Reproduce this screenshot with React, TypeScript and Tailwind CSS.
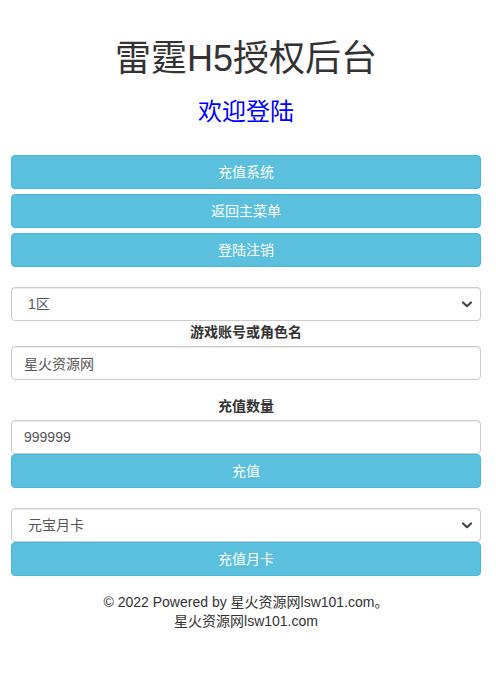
import React from "react";

const Chevron = () => (
  <svg
    className="pointer-events-none absolute right-[8px] top-1/2 -translate-y-1/2"
    width="12"
    height="12"
    viewBox="0 0 12 12"
    fill="none"
  >
    <path d="M2 4.5 L6 8.2 L10 4.5" stroke="#444" strokeWidth="2.2" strokeLinecap="round" strokeLinejoin="round" />
  </svg>
);

const Select = ({ value }: { value: string }) => (
  <div className="relative h-[34px] w-full">
    <select
      defaultValue={value}
      className="h-full w-full appearance-none rounded-[4px] border border-[#ccc] bg-white pl-[16px] pr-[24px] text-[14px] text-[#555] outline-none shadow-[inset_0_1px_1px_rgba(0,0,0,0.075)]"
    >
      <option>{value}</option>
    </select>
    <Chevron />
  </div>
);

const Input = ({ value }: { value: string }) => (
  <input
    defaultValue={value}
    className="block h-[34px] w-full rounded-[4px] border border-[#ccc] bg-white px-[12px] text-[14px] text-[#555] outline-none shadow-[inset_0_1px_1px_rgba(0,0,0,0.075)]"
  />
);

const Btn = ({ children }: { children: React.ReactNode }) => (
  <button className="block h-[34px] w-full rounded-[4px] border border-[#46b8da] bg-[#5bc0de] text-[14px] text-white">
    {children}
  </button>
);

export default function App() {
  return (
    <div
      className="min-h-[683px] bg-white pl-[11px] pr-[15px] text-[#333]"
      style={{ fontFamily: '"Liberation Sans", "Noto Sans CJK SC", sans-serif' }}
    >
      <h1 className="pt-[39px] text-center text-[36px] leading-[40px] text-[#333]">雷霆H5授权后台</h1>
      <h2 className="mt-[20px] text-center text-[24px] leading-[26px] text-[#0000ff]">欢迎登陆</h2>
      <div className="mt-[30px] flex flex-col gap-[5px]">
        <Btn>充值系统</Btn>
        <Btn>返回主菜单</Btn>
        <Btn>登陆注销</Btn>
      </div>
      <div className="mt-[20px]">
        <Select value="1区" />
      </div>
      <div className="mt-[1px] text-center text-[14px] font-bold leading-[20px]">游戏账号或角色名</div>
      <div className="mt-[4px]">
        <Input value="星火资源网" />
      </div>
      <div className="mt-[16px] text-center text-[14px] font-bold leading-[20px]">充值数量</div>
      <div className="mt-[4px]">
        <Input value="999999" />
        <Btn>充值</Btn>
      </div>
      <div className="mt-[20px]">
        <Select value="元宝月卡" />
        <Btn>充值月卡</Btn>
      </div>
      <div className="mt-[16px] text-center text-[14px] leading-[20px] text-[#333]">
        <p>© 2022 Powered by 星火资源网lsw101.com。</p>
        <p className="-mt-[1px]">星火资源网lsw101.com</p>
      </div>
    </div>
  );
}
